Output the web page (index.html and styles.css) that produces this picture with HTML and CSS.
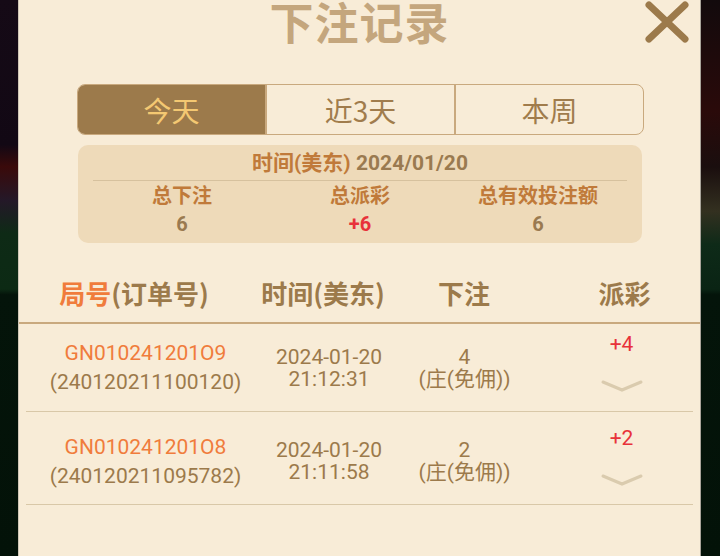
FILE: index.html
```html
<!DOCTYPE html>
<html lang="zh-CN">
<head>
<meta charset="utf-8">
<title>下注记录</title>
<link rel="stylesheet" href="styles.css">
</head>
<body>
<div class="stage">
  <div class="side side-left"></div>
  <div class="panel">
    <h1 class="title">下注记录</h1>
    <button class="close" aria-label="关闭">
      <svg width="46" height="42" viewBox="0 0 46 42"><path d="M5 4 L41 38 M41 4 L5 38" stroke="#9c7a4b" stroke-width="7" stroke-linecap="round" fill="none"/></svg>
    </button>
    <div class="tabs">
      <div class="tab active">今天</div>
      <div class="tab">近3天</div>
      <div class="tab">本周</div>
    </div>
    <div class="summary">
      <div class="sum-date"><span class="lbl">时间(美东)</span> <span class="val">2024/01/20</span></div>
      <div class="sum-cols">
        <div class="sum-col"><div class="lbl">总下注</div><div class="val">6</div></div>
        <div class="sum-col"><div class="lbl">总派彩</div><div class="val red">+6</div></div>
        <div class="sum-col"><div class="lbl">总有效投注额</div><div class="val">6</div></div>
      </div>
    </div>
    <div class="thead">
      <div class="th"><span class="orange">局号</span>(订单号)</div>
      <div class="th">时间(美东)</div>
      <div class="th">下注</div>
      <div class="th th-last">派彩</div>
    </div>
    <div class="row row-a">
      <div class="cell c1"><div class="orange">GN010241201O9</div><div class="oid">(240120211100120)</div></div>
      <div class="cell c2"><div>2024-01-20</div><div>21:12:31</div></div>
      <div class="cell c3"><div>4</div><div>(庄(免佣))</div></div>
      <div class="cell c4"><div class="red">+4</div><svg class="chev" width="42" height="12" viewBox="0 0 42 12"><polyline points="2,2 21,10 40,2" fill="none" stroke="#dacbae" stroke-width="3" stroke-linecap="round"/></svg></div>
    </div>
    <div class="row row-b">
      <div class="cell c1"><div class="orange">GN010241201O8</div><div class="oid">(240120211095782)</div></div>
      <div class="cell c2"><div>2024-01-20</div><div>21:11:58</div></div>
      <div class="cell c3"><div>2</div><div>(庄(免佣))</div></div>
      <div class="cell c4"><div class="red">+2</div><svg class="chev" width="42" height="12" viewBox="0 0 42 12"><polyline points="2,2 21,10 40,2" fill="none" stroke="#dacbae" stroke-width="3" stroke-linecap="round"/></svg></div>
    </div>
  </div>
  <div class="side side-right"></div>
</div>
</body>
</html>
```
FILE: styles.css
```css
* { box-sizing: border-box; }
html, body { margin: 0; padding: 0; }
body {
  width: 720px;
  height: 556px;
  overflow: hidden;
  font-family: Roboto, "Noto Sans CJK SC", sans-serif;
  background: #06140a;
}
.stage {
  display: flex;
  width: 720px;
  height: 556px;
}
.side { height: 556px; }
.side-left {
  width: 18px;
  background: linear-gradient(180deg, #150a16 0%, #120814 26%, #3a0a0a 30%, #241828 36%, #0e2a16 42%, #0c2a14 52%, #04140a 53%, #031208 100%);
}
.side-right {
  width: 19px;
  background: linear-gradient(180deg, #120a0c 0%, #2a0a0a 20%, #1a0e0e 30%, #333020 38%, #0e2a18 44%, #0a2414 52%, #04140a 53%, #031208 100%);
}
.panel {
  position: relative;
  width: 683px;
  height: 556px;
  background: #f8ecd7;
  border-left: 1px solid #cfc6b6;
  border-right: 1px solid #a9a49a;
}
.title {
  margin: 0;
  height: 44px;
  font-size: 44px;
  line-height: 50px;
  font-weight: 700;
  color: #c4a67d;
  text-align: center;
  letter-spacing: 1px;
  overflow: visible;
}
.close {
  position: absolute;
  top: 1px;
  left: 625px;
  width: 46px;
  height: 42px;
  padding: 0;
  border: 0;
  background: none;
}
.close svg { display: block; }
.tabs {
  display: flex;
  margin: 40px 0 0 58px;
  width: 567px;
  height: 51px;
  border: 1.5px solid #c9a97e;
  border-radius: 8px;
  overflow: hidden;
}
.tab {
  flex: 1;
  display: flex;
  align-items: center;
  justify-content: center;
  font-family: "Noto Sans CJK SC", Roboto, sans-serif;
  font-size: 28px;
  color: #a07c4c;
  border-left: 2px solid #c9a97e;
}
.tab:first-child { border-left: 0; }
.tab.active { background: #9c7a4b; color: #f4c872; }
.summary {
  margin: 10px 0 0 59px;
  width: 564px;
  height: 98px;
  background: #eedab9;
  border-radius: 10px;
  padding: 0 15px;
}
.sum-date {
  height: 36px;
  line-height: 36px;
  text-align: center;
  font-size: 21px;
  font-weight: 700;
  border-bottom: 1px solid #d6c19e;
}
.lbl { color: #c07a3a; font-weight: 700; }
.val { color: #9a7a50; font-weight: 700; }
.red { color: #e8323a; }
.sum-cols {
  display: grid;
  grid-template-columns: 1fr 1fr 1fr;
  padding-top: 2px;
}
.sum-col { text-align: center; font-size: 20px; }
.sum-col .lbl { height: 27px; line-height: 27px; }
.sum-col .val { height: 27px; line-height: 29px; }
.sum-col .val.red { color: #e8323a; }
.thead {
  display: grid;
  grid-template-columns: 230px 148px 134px 1fr;
  margin-top: 22px;
  height: 59px;
  border-bottom: 2px solid #c9a97e;
  align-items: center;
  padding-bottom: 2px;
}
.th {
  text-align: center;
  font-size: 26px;
  font-weight: 700;
  color: #9c7a4b;
  font-family: "Noto Sans CJK SC", Roboto, sans-serif;
}
.th-last { padding-left: 18px; }
.orange { color: #f07c3c; }
.row {
  display: grid;
  grid-template-columns: 239px 128px 143px 1fr;
  margin: 0 7px;
  border-bottom: 1.5px solid #d9c8a8;
  color: #9c7a4b;
  font-size: 21px;
  line-height: 22px;
}
.row-a { height: 88px; }
.row-b { height: 93px; padding-top: 6px; }
.cell {
  display: flex;
  flex-direction: column;
  align-items: center;
  justify-content: center;
  text-align: center;
}
.c1 { gap: 7px; }
.c4 { justify-content: flex-start; padding-top: 9px; padding-left: 14px; }
.row-b .c4 { padding-top: 9px; }
.chev { margin-top: 25px; filter: blur(0.5px); }
```
